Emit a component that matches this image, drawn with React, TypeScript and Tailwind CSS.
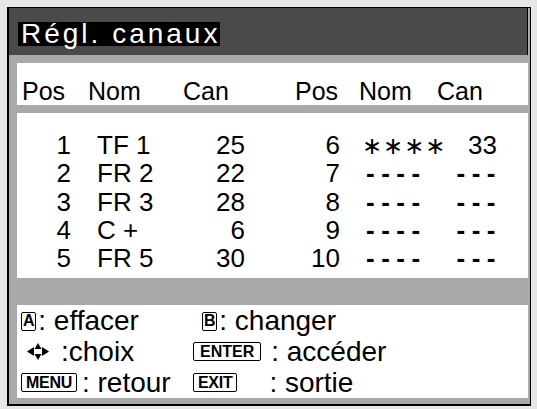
import React from "react";

const rows = [
  { pos: "1", nom: "TF 1", can: "25", pos2: "6", nom2: "stars", can2: "33" },
  { pos: "2", nom: "FR 2", can: "22", pos2: "7", nom2: "", can2: "" },
  { pos: "3", nom: "FR 3", can: "28", pos2: "8", nom2: "", can2: "" },
  { pos: "4", nom: "C +", can: "6", pos2: "9", nom2: "", can2: "" },
  { pos: "5", nom: "FR 5", can: "30", pos2: "10", nom2: "", can2: "" },
];

function Key({ label, wide }: { label: string; wide?: boolean }) {
  return (
    <span
      className={`inline-flex items-center justify-center h-[19px] border-[1.5px] border-black rounded-[2px] font-bold text-[16px] leading-none tracking-[-0.3px] ${
        wide ? "px-[4px]" : "px-[1px]"
      }`}
    >
      {label}
    </span>
  );
}

function ArrowPad() {
  return (
    <svg width="22" height="17" viewBox="0 0 22 17" className="shrink-0">
      <polygon points="0,8.5 7,4 7,13" fill="#000" />
      <polygon points="22,8.5 15,4 15,13" fill="#000" />
      <polygon points="11,0 14.5,6 7.5,6" fill="#000" />
      <polygon points="11,17 14.5,11 7.5,11" fill="#000" />
    </svg>
  );
}

function Dashes({ n, end }: { n: number; end?: boolean }) {
  return (
    <span
      className={`font-bold text-[26px] leading-[0] tracking-[6.5px] whitespace-nowrap ${
        end ? "mr-[-5px]" : ""
      }`}
    >
      {"-".repeat(n)}
    </span>
  );
}

export default function App() {
  return (
    <div className="w-[537px] h-[409px] bg-[#e6e6e6] pt-[7px] pl-[7px] font-['Liberation_Sans',Arial,sans-serif] text-black">
      <div className="w-[524px] h-[399px] border-l-2 border-b-2 border-t border-r border-black bg-[#a8a8a8] pr-[2px] flex flex-col">
        {/* title */}
        <div className="h-[47px] bg-[#4a4a4a] border-r border-black flex items-center pt-[4px]">
          <span className="ml-[9px] bg-black text-white text-[28px] leading-[24px] tracking-[3px] pl-[3px] whitespace-nowrap">
            Régl. canaux
          </span>
        </div>

        {/* header */}
        <div className="mt-[8px] ml-[8px] h-[42px] bg-white pl-[5px] pt-[16px] text-[25px] leading-[25px] grid grid-cols-[66px_95px_112px_64px_78px_1fr] whitespace-nowrap">
          <span>Pos</span>
          <span>Nom</span>
          <span>Can</span>
          <span>Pos</span>
          <span>Nom</span>
          <span>Can</span>
        </div>

        {/* list */}
        <div className="mt-[8px] ml-[8px] h-[165px] bg-white pt-[18px] text-[26px] leading-[28px] whitespace-nowrap">
          {rows.map((r) => (
            <div key={r.pos} className="h-[28.3px] grid grid-cols-[54px_126px_48px_95px_100px_57px]">
              <span className="text-right">{r.pos}</span>
              <span className="pl-[26px]">{r.nom}</span>
              <span className="text-right">{r.can}</span>
              <span className="text-right">{r.pos2}</span>
              {r.nom2 === "stars" ? (
                <span className="pl-[22px]">
                  <span className="font-['DejaVu_Sans',sans-serif] text-[24px] leading-[0] tracking-[1px]">
                    ∗∗∗∗
                  </span>
                </span>
              ) : (
                <span className="pl-[26px]">
                  <Dashes n={4} />
                </span>
              )}
              <span className="text-right">{r.can2 ? r.can2 : <Dashes n={3} end />}</span>
            </div>
          ))}
        </div>

        {/* footer */}
        <div className="mt-[27px] ml-[8px] h-[93px] bg-white pl-[4px] pt-[1px] text-[28px] leading-[28px] grid grid-cols-[172px_1fr] whitespace-nowrap">
          <div className="flex items-center gap-[2px]">
            <Key label="A" />
            <span>: effacer</span>
          </div>
          <div className="flex items-center gap-[2px] pl-[9px]">
            <Key label="B" />
            <span>: changer</span>
          </div>
          <div className="flex items-center gap-[8px] pl-[6px]">
            <ArrowPad />
            <span className="ml-[4px]">:choix</span>
          </div>
          <div className="flex items-center gap-[10px]">
            <span className="inline-flex items-center justify-center h-[19px] border-[1.5px] border-black rounded-[2px] font-bold text-[16px] leading-none px-[6px]">
              ENTER
            </span>
            <span>: accéder</span>
          </div>
          <div className="flex items-center gap-[5px]">
            <Key label="MENU" wide />
            <span>: retour</span>
          </div>
          <div className="flex items-center gap-[32px]">
            <Key label="EXIT" wide />
            <span>: sortie</span>
          </div>
        </div>
      </div>
    </div>
  );
}
